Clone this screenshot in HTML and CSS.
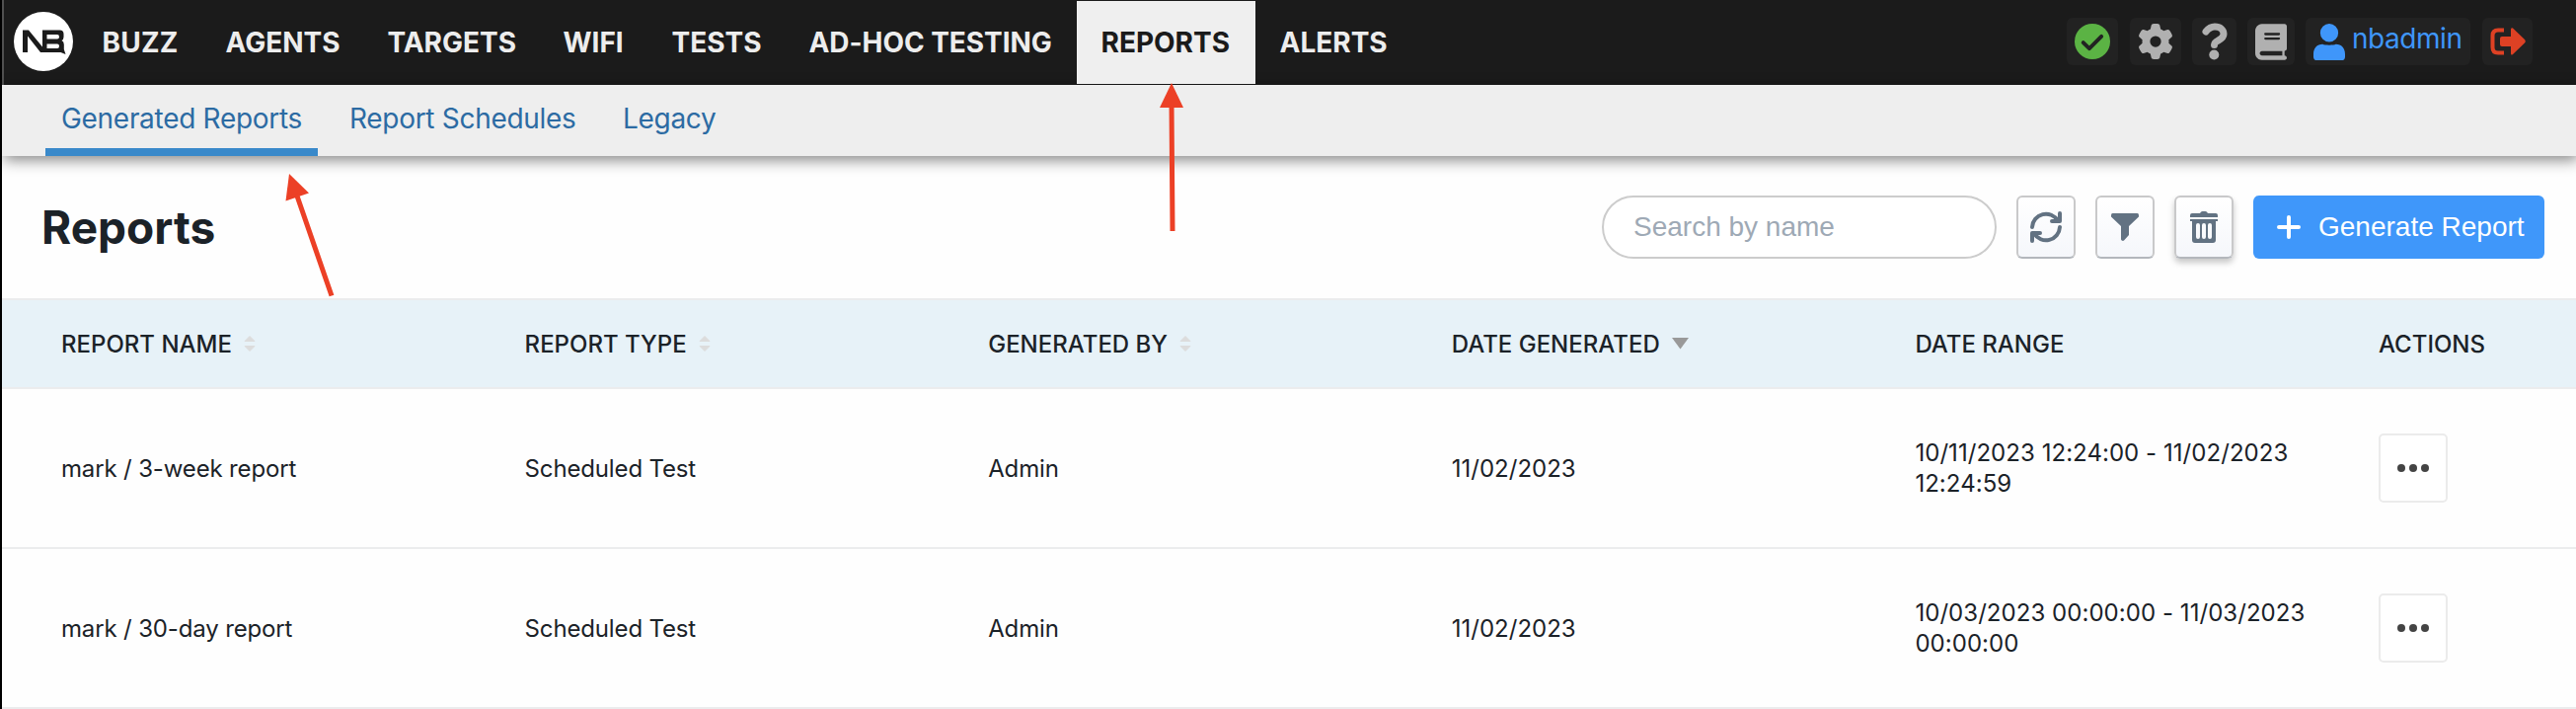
FILE: index.html
```html
<!DOCTYPE html>
<html lang="en">
<head>
<meta charset="utf-8">
<title>Reports</title>
<link rel="stylesheet" href="styles.css">
</head>
<body>
<div class="page">
  <header class="topbar">
    <a class="logo" href="#">
      <svg viewBox="0 0 60 60" width="60" height="60">
        <circle cx="30" cy="30" r="30" fill="#fff"/>
        <path fill="#1b1b1b" fill-rule="evenodd" d="M9 41V18.500H15L29 35.500V18.500H46.500Q50.500 18.500 50.500 22.500V25.500Q50.500 28 48.500 29Q50.800 30 50.800 33V38L52.500 43L47.500 41H27L14 24.500V41ZM33.500 23V27.500H44Q46 27.500 46 25.200Q46 23 44 23ZM33.500 32.500V37H44Q46 37 46 34.700Q46 32.500 44 32.500Z"/>
      </svg>
    </a>
    <nav class="nav">
      <a class="nav-item n-buzz" href="#">BUZZ</a>
      <a class="nav-item n-agents" href="#">AGENTS</a>
      <a class="nav-item n-targets" href="#">TARGETS</a>
      <a class="nav-item n-wifi" href="#">WIFI</a>
      <a class="nav-item n-tests" href="#">TESTS</a>
      <a class="nav-item n-adhoc" href="#">AD-HOC TESTING</a>
      <a class="nav-item n-reports active" href="#">REPORTS</a>
      <a class="nav-item n-alerts" href="#">ALERTS</a>
    </nav>
    <div class="tools">
      <a class="tool t-status" href="#"><svg viewBox="0 0 512 512" width="36" height="36"><circle cx="256" cy="256" r="256" fill="#5bb344"/><path fill="none" stroke="#222" stroke-width="56" stroke-linecap="round" stroke-linejoin="round" d="M124 272L212 358L386 184"/></svg></a>
      <a class="tool t-gear" href="#"><svg viewBox="0 0 512 512" width="36" height="36"><path fill="#b0b0b0" d="M495.900 166.600c3.200 8.700 .5 18.400-6.400 24.600l-43.300 39.400c1.100 8.300 1.700 16.800 1.700 25.400s-.6 17.100-1.700 25.400l43.300 39.400c6.900 6.200 9.600 15.900 6.400 24.600c-4.400 11.900-9.700 23.300-15.800 34.300l-4.700 8.100c-6.600 11-14 21.400-22.100 31.200c-5.900 7.200-15.700 9.600-24.500 6.800l-55.700-17.700c-13.400 10.300-28.200 18.900-44 25.400l-12.500 57.100c-2 9.100-9 16.300-18.200 17.800c-13.800 2.300-28 3.500-42.500 3.500s-28.700-1.200-42.500-3.500c-9.200-1.500-16.200-8.700-18.200-17.800l-12.500-57.100c-15.800-6.500-30.600-15.100-44-25.400L83.100 425.900c-8.800 2.800-18.600 .3-24.500-6.800c-8.100-9.800-15.500-20.200-22.100-31.200l-4.700-8.100c-6.100-11-11.400-22.400-15.800-34.300c-3.200-8.700-.5-18.400 6.400-24.600l43.300-39.400C64.600 273.100 64 264.600 64 256s.6-17.100 1.700-25.400L22.400 191.200c-6.900-6.200-9.600-15.900-6.400-24.600c4.400-11.900 9.700-23.300 15.800-34.300l4.700-8.100c6.600-11 14-21.400 22.100-31.200c5.900-7.200 15.700-9.600 24.500-6.800l55.700 17.700c13.400-10.300 28.200-18.900 44-25.400l12.500-57.100c2-9.100 9-16.300 18.200-17.800C227.300 1.200 241.500 0 256 0s28.700 1.200 42.500 3.500c9.200 1.500 16.200 8.700 18.200 17.800l12.500 57.100c15.800 6.500 30.600 15.100 44 25.400l55.700-17.700c8.800-2.800 18.600-.3 24.500 6.800c8.100 9.800 15.500 20.200 22.100 31.200l4.700 8.100c6.100 11 11.400 22.400 15.800 34.300zM256 336a80 80 0 1 0 0-160 80 80 0 1 0 0 160z"/></svg></a>
      <a class="tool t-help" href="#"><svg viewBox="0 0 26 38" width="26" height="38"><path fill="none" stroke="#b0b0b0" stroke-width="7" stroke-linecap="round" stroke-linejoin="round" d="M4 9Q8 4 13 4C18.500 4 22 7 22 11.500C22 18 12.500 17.500 12.500 22.500"/><circle cx="12.300" cy="32.500" r="5" fill="#b0b0b0"/></svg></a>
      <a class="tool t-book" href="#"><svg viewBox="0 0 448 512" width="32" height="37"><path fill="#b0b0b0" d="M96 0C43 0 0 43 0 96V416c0 53 43 96 96 96H384h32c17.700 0 32-14.300 32-32s-14.300-32-32-32V384c17.700 0 32-14.300 32-32V32c0-17.700-14.300-32-32-32H384 96zm0 384H384v64H96c-17.700 0-32-14.300-32-32s14.300-32 32-32zm32-240c0-8.800 7.200-16 16-16H336c8.800 0 16 7.200 16 16s-7.200 16-16 16H144c-8.800 0-16-7.200-16-16zm16 48H336c8.800 0 16 7.200 16 16s-7.200 16-16 16H144c-8.800 0-16-7.200-16-16s7.200-16 16-16z"/></svg></a>
      <a class="tool t-user" href="#"><svg viewBox="0 0 448 512" width="32" height="37" preserveAspectRatio="none"><path fill="#3f96fa" d="M224 256A128 128 0 1 0 224 0a128 128 0 1 0 0 256zM130 288C50 288 0 345 0 425V462Q0 512 50 512H398Q448 512 448 462V425C448 345 398 288 318 288C285 305 163 305 130 288Z"/></svg><span class="user-name">nbadmin</span></a>
      <a class="tool t-exit" href="#"><svg viewBox="0 0 36 28" width="36" height="28"><path fill="#dd4124" d="M21 2Q21 -.5 23 .5L35 12Q36.500 14 35 15.500L23 27Q21 28.500 21 26V19H12Q10 19 10 17V11Q10 9 12 9H21Z"/><path fill="none" stroke="#dd4124" stroke-width="4" d="M14 2.500H8Q2.500 2.500 2.500 8V20Q2.500 25.500 8 25.500H14"/></svg></a>
    </div>
  </header>

  <nav class="subnav">
    <a class="tab s-gen current" href="#">Generated Reports</a>
    <a class="tab s-sched" href="#">Report Schedules</a>
    <a class="tab s-legacy" href="#">Legacy</a>
  </nav>

  <main>
    <section class="heading">
      <h1>Reports</h1>
      <div class="controls">
        <input class="search" type="text" placeholder="Search by name">
        <button class="icon-btn"><svg viewBox="0 0 32 32" width="32" height="32"><g fill="none" stroke="#627282" stroke-width="4" stroke-linecap="round" stroke-linejoin="round"><path d="M2 16A14 14 0 0 1 28 9.500M30 16A14 14 0 0 1 4 22.500"/><path d="M30 2V10H22M2 30V22H10"/></g></svg></button>
        <button class="icon-btn"><svg viewBox="0 0 28 28" width="28" height="28"><path fill="#627282" d="M1.500 0H26.500Q28 0 28 2V3.500L18 13V22L13 27.500Q12 28.300 10.800 27.500Q10 27 10 26V13L0 3.500V2Q0 0 1.500 0Z"/></svg></button>
        <button class="icon-btn raised"><svg viewBox="0 0 28 32" width="28" height="32"><path fill="#627282" fill-rule="evenodd" d="M0 6V4Q0 2 2 2H10Q11 0 12.500 0H15.500Q17 0 18 2H26Q28 2 28 4V6ZM0 8H28V10H26V29Q26 32 23 32H5Q2 32 2 29V10H0ZM8 12Q6 12 6 14V26Q6 28 8 28Q10 28 10 26V14Q10 12 8 12ZM14 12Q12 12 12 14V26Q12 28 14 28Q16 28 16 26V14Q16 12 14 12ZM20 12Q18 12 18 14V26Q18 28 20 28Q22 28 22 26V14Q22 12 20 12Z"/></svg></button>
        <button class="primary"><svg viewBox="0 0 24 24" width="24" height="24"><path stroke="#fff" stroke-width="4" stroke-linecap="round" d="M12 2V22M2 12H22"/></svg><span>Generate Report</span></button>
      </div>
    </section>

    <section class="table">
      <div class="row head">
        <div class="cell"><span>REPORT NAME</span><svg class="sort" viewBox="0 0 12 16" width="12" height="16"><path fill="#dcdcdc" stroke="#dcdcdc" stroke-linejoin="round" d="M6 .5L11 5.500H1ZM1 10.500H11L6 15.500Z"/></svg></div>
        <div class="cell"><span>REPORT TYPE</span><svg class="sort" viewBox="0 0 12 16" width="12" height="16"><path fill="#dcdcdc" stroke="#dcdcdc" stroke-linejoin="round" d="M6 .5L11 5.500H1ZM1 10.500H11L6 15.500Z"/></svg></div>
        <div class="cell"><span>GENERATED BY</span><svg class="sort" viewBox="0 0 12 16" width="12" height="16"><path fill="#dcdcdc" stroke="#dcdcdc" stroke-linejoin="round" d="M6 .5L11 5.500H1ZM1 10.500H11L6 15.500Z"/></svg></div>
        <div class="cell"><span>DATE GENERATED</span><svg class="sort-desc" viewBox="0 0 17 12" width="17" height="12"><path fill="#999" d="M0 0H17L8.500 11.500Z"/></svg></div>
        <div class="cell"><span>DATE RANGE</span></div>
        <div class="cell"><span>ACTIONS</span></div>
      </div>
      <div class="row">
        <div class="cell text">mark / 3-week report</div>
        <div class="cell text">Scheduled Test</div>
        <div class="cell text">Admin</div>
        <div class="cell">11/02/2023</div>
        <div class="cell range">10/11/2023 12:24:00 - 11/02/2023<br>12:24:59</div>
        <div class="cell"><button class="more"><svg viewBox="0 0 32 8" width="32" height="8"><g fill="#444"><circle cx="4" cy="4" r="4"/><circle cx="16" cy="4" r="4"/><circle cx="28" cy="4" r="4"/></g></svg></button></div>
      </div>
      <div class="row">
        <div class="cell text">mark / 30-day report</div>
        <div class="cell text">Scheduled Test</div>
        <div class="cell text">Admin</div>
        <div class="cell">11/02/2023</div>
        <div class="cell range">10/03/2023 00:00:00 - 11/03/2023<br>00:00:00</div>
        <div class="cell"><button class="more"><svg viewBox="0 0 32 8" width="32" height="8"><g fill="#444"><circle cx="4" cy="4" r="4"/><circle cx="16" cy="4" r="4"/><circle cx="28" cy="4" r="4"/></g></svg></button></div>
      </div>
    </section>
  </main>

  <svg class="callouts" viewBox="0 0 2610 718" width="2610" height="718">
    <g fill="#ec4026" stroke="none">
      <path d="M1187 84L1199 109H1175Z"/><path d="M293 176L313 195.500L289.500 203.500Z"/>
    </g>
    <g stroke="#ec4026" stroke-width="5" fill="none"><path d="M1187 105L1188 234M300.500 197L336 299.500"/></g>
  </svg>
</div>
</body>
</html>
```
FILE: styles.css
```css
* { box-sizing: border-box; }

body {
  margin: 0;
  background: #fefefe;
  color: #1b2228;
  font-family: Inter, "Liberation Sans", sans-serif;
}

a { text-decoration: none; }

.page {
  position: relative;
  width: 2610px;
  height: 718px;
  overflow: hidden;
  border-left: 2px solid #000;
}

.topbar {
  display: flex;
  align-items: center;
  height: 86px;
  padding: 0 44px 0 10px;
  border-left: 2px solid #505050;
  background: #1b1b1b;
}

.logo { display: flex; width: 60px; height: 60px; margin-bottom: 2px; }

.nav { display: flex; height: 84px; margin-left: 5px; }

.nav-item {
  display: flex;
  align-items: center;
  padding: 0 20px 0 24.5px;
  color: #ededed;
  font-size: 28px;
  font-weight: 700;
  letter-spacing: 0;
  white-space: nowrap;
}

.nav-item.active { background: #efefef; color: #1b1b1b; }

.n-buzz { width: 125px; letter-spacing: .2px; }
.n-agents { width: 164px; }
.n-targets { width: 178px; }
.n-wifi { width: 110px; }
.n-tests { width: 139px; }
.n-adhoc { width: 296px; letter-spacing: -.05px; }
.n-reports { width: 181px; }
.n-alerts { width: 160px; }

.tools { display: flex; margin-left: auto; margin-bottom: 2px; }

.tool {
  display: flex;
  align-items: center;
  justify-content: center;
  height: 48px;
  border-radius: 6px;
  background: #222;
}

.t-status { width: 52px; margin-right: 12px; }
.t-gear { width: 52px; margin-right: 11px; }
.t-help { width: 45px; margin-right: 11px; }
.t-book { width: 48px; margin-right: 11px; }
.t-user { width: 167px; margin-right: 12px; justify-content: flex-start; padding-left: 8px; gap: 7px; }
.t-exit { width: 51px; }

.user-name {
  margin-bottom: 6px;
  color: #3f96fa;
  font-size: 28px;
  letter-spacing: -.45px;
  line-height: 34px;
}

.subnav {
  display: flex;
  gap: 16px;
  height: 72px;
  padding-left: 44px;
  background: #eee;
  box-shadow: 2px 4px 14px rgba(0, 0, 0, .48);
}

.tab {
  display: flex;
  align-items: center;
  height: 72px;
  padding: 8px 16px 4px;
  border-bottom: 8px solid transparent;
  color: #2c6ba3;
  font-size: 28px;
  letter-spacing: -.3px;
  white-space: nowrap;
}

.tab.current { border-color: #3989ca; }

.s-gen { width: 276px; }
.s-sched { width: 261px; }

.heading {
  display: flex;
  align-items: center;
  justify-content: space-between;
  height: 144px;
  padding: 0 32px 0 40px;
}

h1 {
  margin: 0;
  font-size: 46px;
  font-weight: 700;
  letter-spacing: 0;
  line-height: 56px;
}

.controls { display: flex; gap: 20px; }

.search {
  width: 400px;
  height: 64px;
  padding: 0 30px;
  border: 2px solid #ccc;
  border-radius: 32px;
  background: #fff;
  font: 28px "Liberation Sans", Arial, sans-serif;
}

.search::placeholder { color: #9ea9b5; opacity: 1; }

.icon-btn {
  display: flex;
  align-items: center;
  justify-content: center;
  width: 60px;
  height: 64px;
  padding: 0;
  border: 2px solid #c9c9ca;
  border-bottom-color: #b3b7bc;
  border-radius: 6px;
  background: linear-gradient(#fff, #f5f7fb);
}

.icon-btn.raised { box-shadow: 0 4px 6px rgba(0, 0, 0, .22); }

.primary {
  display: flex;
  align-items: center;
  width: 295px;
  height: 64px;
  padding: 0 0 0 24px;
  border: 0;
  border-radius: 6px;
  background: #3f97fa;
  color: #fff;
  font: 28px "Liberation Sans", Arial, sans-serif;
  gap: 18px;
  white-space: nowrap;
}

.table { border-top: 2px solid #ebeced; }

.row {
  display: grid;
  grid-template-columns: repeat(5, 469.6px) 1fr;
  align-items: center;
  height: 162px;
  padding-left: 60px;
  border-bottom: 2px solid #ebeced;
  font-size: 24px;
  line-height: 31px;
}

.row.head { height: 90px; background: #e7f2f8; font-weight: 500; }

.cell { display: flex; align-items: center; white-space: nowrap; }
.cell.range { display: block; letter-spacing: .05px; }
.cell.text { letter-spacing: -.15px; }

.sort { margin-left: 12px; }
.sort-desc { margin-left: 12px; }

.more {
  display: flex;
  align-items: center;
  justify-content: center;
  width: 70px;
  height: 70px;
  padding: 0;
  border: 2px solid #ebebeb;
  border-radius: 5px;
  background: #fff;
}

.callouts { position: absolute; left: -2px; top: 0; pointer-events: none; }
```
